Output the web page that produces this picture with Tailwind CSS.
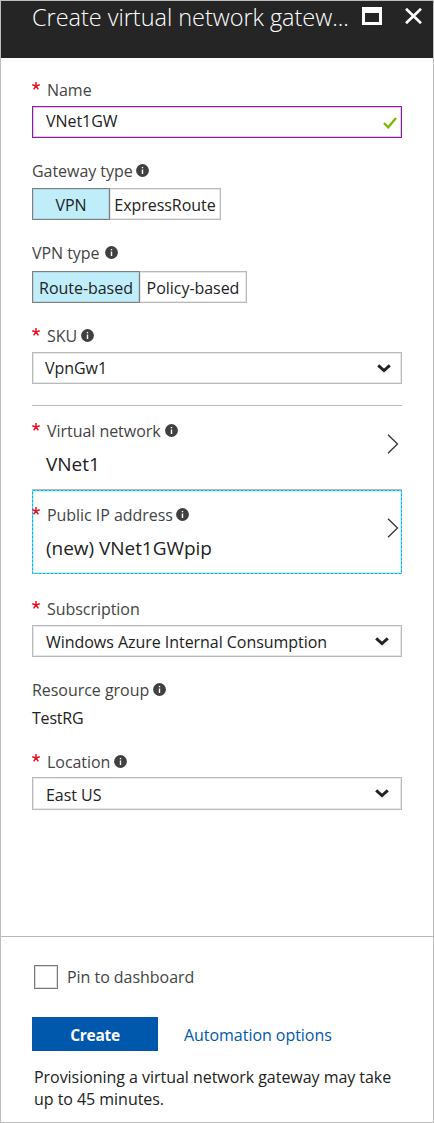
<!DOCTYPE html>
<html lang="en">
<head>
<meta charset="utf-8">
<title>Create virtual network gateway</title>
<script src="https://cdn.jsdelivr.net/npm/@tailwindcss/browser@4"></script>
</head>
<body class="bg-white">
<svg class="hidden">
  <symbol id="info" viewBox="0 0 13 13"><circle cx="6.5" cy="6.5" r="6.4" fill="#404040"/><path d="M5.8 3h1.4v1.3H5.8zM5.8 5.4h1.4V10H5.8z" fill="#fff"/></symbol>
  <symbol id="down" viewBox="0 0 14 9"><path d="M1.2 1.4 7 6.6l5.8-5.2" fill="none" stroke="#222" stroke-width="2.9"/></symbol>
  <symbol id="next" viewBox="0 0 12 20"><path d="M1 .7 10.5 10 1 19.3" fill="none" stroke="#333" stroke-width="1.3"/></symbol>
  <symbol id="star" viewBox="0 0 8 8"><path d="M4 4V0M4 4 .2 2.8M4 4l3.8-1.2M4 4 1.6 7.4M4 4l2.4 3.4" fill="none" stroke="#e81123" stroke-width="1.5"/></symbol>
</svg>
<main class="flex h-[1123px] w-[434px] flex-col border border-[#bdbdbd] bg-white font-['Open_Sans','Noto_Sans',sans-serif] text-[16px] leading-5 tracking-[-0.04px] text-[#222]">
  <header class="flex h-[57px] shrink-0 bg-[#252525] pl-[31px] text-white">
    <h1 class="w-[330px] whitespace-nowrap text-[23.5px] font-light leading-[32px]">Create virtual network gatew...</h1>
    <svg class="mt-1.5 h-[18px] w-5" viewBox="0 0 20 18"><path d="M0 0h20v18H0zM3 6v9h14V6z" fill="#fff" fill-rule="evenodd"/></svg>
    <svg class="ml-[23px] mt-[7px] h-4 w-[17px]" viewBox="0 0 17 16"><path d="m1 .8 15 14.4M16 .8 1 15.2" stroke="#fff" stroke-width="2.7"/></svg>
  </header>
  <section class="flex h-[878px] shrink-0 flex-col px-[31px] pt-[22px]">
    <div class="flex h-5 text-[#444]"><svg class="mt-0.5 size-2"><use href="#star"/></svg><span class="ml-[7px]">Name</span></div>
    <div class="mt-1.5 flex h-8 items-center justify-between border border-[#881fa3] pl-[13px] pr-1 shadow-[inset_0_0_0_1px_#e0c8e6]"><span class="pb-[3px]">VNet1GW</span>
      <svg class="mt-0.5 h-3 w-[14px]" viewBox="0 0 14 12"><path d="m1 6 4.2 4.3L13 1" fill="none" stroke="#7fba00" stroke-width="2.4"/></svg></div>

    <div class="mt-[23px] flex h-5 text-[#444]"><span>Gateway type</span><svg class="ml-[3px] mt-[3px] size-[13px]"><use href="#info"/></svg></div>
    <div class="mt-[7px] flex h-8 leading-[32px]">
      <div class="w-[78px] border border-[#7f7f7f] bg-[#bfeefa] text-center shadow-[inset_0_0_0_1px_#afd9e4]">VPN</div>
      <div class="w-[111px] whitespace-nowrap border border-l-0 border-[#bababa] text-center shadow-[inset_0_0_0_1px_#e8e8e8]">ExpressRoute</div>
    </div>

    <div class="mt-[23px] flex h-5 text-[#444]"><span>VPN type</span><svg class="ml-[5px] mt-[3px] size-[13px]"><use href="#info"/></svg></div>
    <div class="mt-2 flex h-8 leading-[32px]">
      <div class="w-[108px] whitespace-nowrap border border-[#7f7f7f] bg-[#bfeefa] text-center shadow-[inset_0_0_0_1px_#afd9e4]">Route-based</div>
      <div class="w-[107px] whitespace-nowrap border border-l-0 border-[#bababa] text-center shadow-[inset_0_0_0_1px_#e8e8e8]">Policy-based</div>
    </div>

    <div class="mt-[23px] flex h-5 text-[#444]"><svg class="mt-0.5 size-2"><use href="#star"/></svg><span class="ml-[7px]">SKU</span><svg class="ml-1 mt-[3px] size-[13px]"><use href="#info"/></svg></div>
    <div class="mt-1.5 flex h-8 items-center justify-between border border-[#bababa] pl-3 pr-2.5 shadow-[inset_0_0_0_1px_#e8e8e8]"><span>VpnGw1</span><svg class="h-[9px] w-[14px]"><use href="#down"/></svg></div>

    <div class="mt-[21px] flex h-[84px] border-t border-[#bababa] pt-[15px]">
      <div class="grow">
        <div class="flex h-5 text-[#444]"><svg class="mt-0.5 size-2"><use href="#star"/></svg><span class="ml-[7px]">Virtual network</span><svg class="ml-1 mt-[3px] size-[13px]"><use href="#info"/></svg></div>
        <div class="mt-[11px] pl-[14px] text-[19px] leading-6">VNet1</div>
      </div>
      <svg class="mr-[3px] mt-[13px] h-5 w-3"><use href="#next"/></svg>
    </div>
    <div class="border-t border-[#bababa]">
      <div class="relative flex h-[84px] border border-[#b5ebfb] pt-3.5 shadow-[inset_0_0_0_1px_#d5f2fc]">
        <svg class="absolute -left-px -top-px h-[84px] w-[370px]" viewBox="0 0 370 84"><rect x=".5" y=".5" width="369" height="83" fill="none" stroke="#00b4f0" stroke-dasharray="3 1"/></svg>
        <div class="-ml-px grow">
          <div class="relative flex h-5 text-[#444]"><svg class="mt-0.5 size-2"><use href="#star"/></svg><span class="ml-[7px]">Public IP address</span><svg class="ml-[3px] mt-[3px] size-[13px]"><use href="#info"/></svg></div>
          <div class="mt-[11px] pl-[14px] text-[19px] leading-6">(new) VNet1GWpip</div>
        </div>
        <svg class="mr-0.5 mt-[13px] h-5 w-3"><use href="#next"/></svg>
      </div>
    </div>

    <div class="mt-[25px] flex h-5 text-[#444]"><svg class="mt-0.5 size-2"><use href="#star"/></svg><span class="ml-[7px]">Subscription</span></div>
    <div class="mt-1.5 flex h-8 items-center justify-between border border-[#bababa] pl-[13px] pr-3 shadow-[inset_0_0_0_1px_#e8e8e8]"><span class="pt-0.5">Windows Azure Internal Consumption</span><svg class="h-[9px] w-[14px]"><use href="#down"/></svg></div>

    <div class="mt-[23px] flex h-5 text-[#444]"><span>Resource group</span><svg class="ml-1 mt-[3px] size-[13px]"><use href="#info"/></svg></div>
    <div class="mt-2 h-5 tracking-[-0.2px]">TestRG</div>

    <div class="mt-6 flex h-5 text-[#444]"><svg class="mt-0.5 size-2"><use href="#star"/></svg><span class="ml-[7px]">Location</span><svg class="ml-1 mt-[3px] size-[13px]"><use href="#info"/></svg></div>
    <div class="mt-[5px] flex h-[33px] items-center justify-between border border-[#bababa] pl-[13px] pr-3 shadow-[inset_0_0_0_1px_#e8e8e8]"><span class="pt-0.5">East US</span><svg class="h-[9px] w-[14px]"><use href="#down"/></svg></div>
  </section>
  <footer class="grow border-t border-[#bababa] px-[31px] pt-7">
    <label class="flex h-6 items-center pl-0.5 text-[#444]"><span class="size-6 border border-[#777] shadow-[inset_0_0_0_1px_#ddd]"></span><span class="ml-[9px]">Pin to dashboard</span></label>
    <div class="mt-7 flex h-[34px] items-center">
      <button class="h-[34px] w-[126px] bg-[#0058ad] pt-0.5 text-[15.5px] font-bold tracking-[-0.3px] text-white">Create</button>
      <a class="ml-[26px] pt-0.5 text-[#0058ad]">Automation options</a>
    </div>
    <p class="mt-[15px] whitespace-nowrap pl-0.5 leading-[22px]">Provisioning a virtual network gateway may take<br>up to 45 minutes.</p>
  </footer>
</main>
</body>
</html>
